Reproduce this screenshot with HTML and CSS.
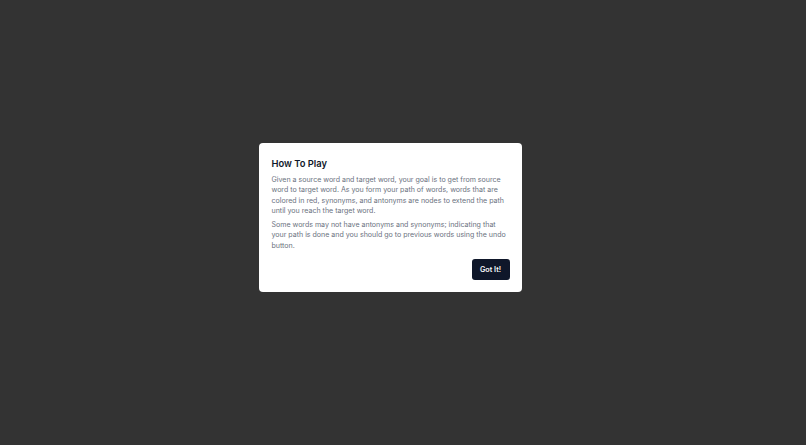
FILE: index.html
```html
<!DOCTYPE html>
<html>
<head>
<meta charset="utf-8">
<link rel="stylesheet" href="styles.css">
</head>
<body>
<div class="overlay">
  <div class="dialog">
    <h2 class="title">How To Play</h2>
    <p class="text">Given a source word and target word, your goal is to get from source word to target word. As you form your path of words, words that are colored in red, synonyms, and antonyms are nodes to extend the path until you reach the target word.</p>
    <p class="text last">Some words may not have antonyms and synonyms; indicating that your path is done and you should go to previous words using the undo button.</p>
    <div class="footer">
      <button class="btn">Got It!</button>
    </div>
  </div>
</div>
</body>
</html>
```
FILE: styles.css
```css
html, body {
  margin: 0;
  padding: 0;
  width: 806px;
  height: 445px;
  background: #333333;
  font-family: Inter, "Noto Sans", sans-serif;
}
.overlay {
  box-sizing: border-box;
  width: 806px;
  height: 445px;
  padding: 143px 0 0 259px;
}
.dialog {
  box-sizing: border-box;
  width: 263px;
  background: #ffffff;
  border-radius: 4px;
  padding: 14px 12.5px 12.5px 12.5px;
  display: flex;
  flex-direction: column;
}
.title {
  margin: 0 0 3.5px 0;
  font-size: 9.4px;
  line-height: 14.4px;
  font-weight: 600;
  color: #0f172a;
}
.text {
  margin: 0 0 4px 0;
  font-size: 7.05px;
  line-height: 10.3px;
  color: #6b7280;
}
.text.last {
  margin-bottom: 0;
}
.footer {
  display: flex;
  justify-content: flex-end;
  margin-top: 8.5px;
}
.btn {
  width: 38px;
  height: 20.5px;
  border: none;
  border-radius: 3px;
  background: #0f172a;
  color: #f8fafc;
  font-family: Inter, "Noto Sans", sans-serif;
  font-size: 7.2px;
  font-weight: 600;
  padding: 0;
}
```
